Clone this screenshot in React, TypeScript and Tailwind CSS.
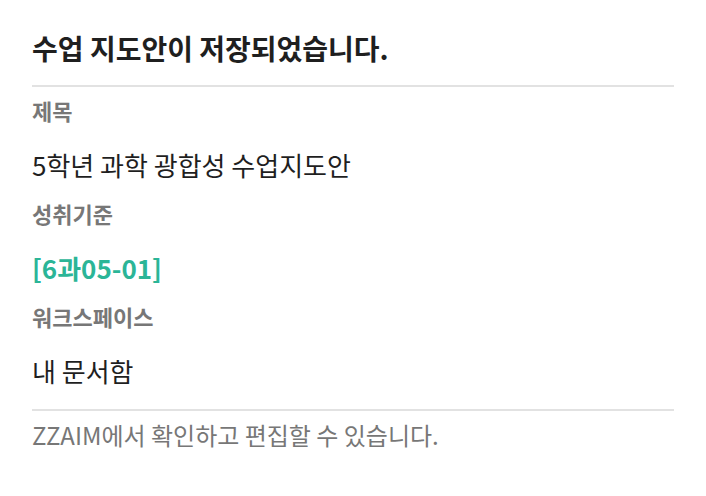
const fields = [
  { label: '제목', value: '5학년 과학 광합성 수업지도안', accent: false },
  { label: '성취기준', value: '[6과05-01]', accent: true },
  { label: '워크스페이스', value: '내 문서함', accent: false },
];

export default function App() {
  return (
    <div
      className="min-h-[496px] w-full bg-white px-8 pt-[30px]"
      style={{ fontFamily: '"Noto Sans CJK KR", "Noto Sans", sans-serif' }}
    >
      <h1 className="text-[28px] font-bold leading-[36px] text-[#1f1f1f]">
        수업 지도안이 저장되었습니다.
      </h1>

      <div className="mt-[19px] h-[2px] bg-[#e2e2e2]" />

      <div className="mt-[8px] flex flex-col gap-[15px]">
        {fields.map((f) => (
          <div key={f.label}>
            <div className="text-[22px] font-bold leading-[30px] text-[#777777]">{f.label}</div>
            <div
              className={
                f.accent
                  ? 'mt-[22px] text-[26px] font-bold leading-[36px] text-[#2bb597]'
                  : 'mt-[22px] text-[26px] leading-[36px] text-[#1f1f1f]'
              }
            >
              {f.value}
            </div>
          </div>
        ))}
      </div>

      <div className="mt-[20px] h-[2px] bg-[#e2e2e2]" />

      <p className="mt-[9px] text-[24px] leading-[30px] text-[#777777]">
        ZZAIM에서 확인하고 편집할 수 있습니다.
      </p>
    </div>
  );
}
